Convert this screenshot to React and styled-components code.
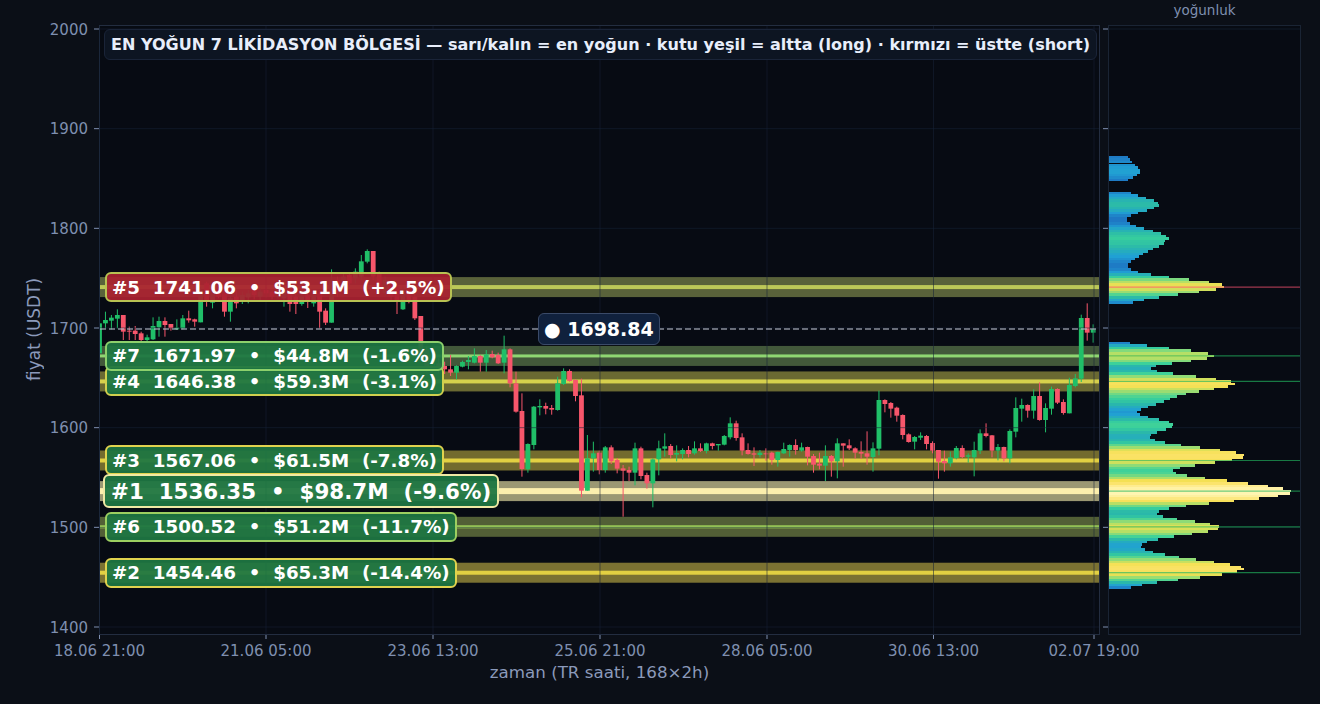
import React from 'react';
import styled, {createGlobalStyle} from 'styled-components';

const priceToY = p => 29 + (2000 - p) * 0.99667;
const candleX = i => 99.5 + 5.95 * i;

const C = {
    page: '#0b0f17',
    plot: '#070b13',
    frame: '#232d40',
    tick: '#7f8fb0',
    up: '#20bf68',
    down: '#f7566b'
};

// type, body top, body bottom, wick top, wick bottom (read off the picture)
const left = [
    ['g', 250, 340, 250, 340], ['g', 240, 250, 215, 265], ['g', 233, 242, 225, 268], ['g', 225, 236, 208, 265],
    ['r', 225, 275, 225, 300], ['r', 272, 275, 260, 300], ['r', 272, 282, 258, 300], ['r', 280, 300, 275, 305],
    ['g', 292, 300, 284, 305], ['g', 258, 298, 232, 300], ['g', 243, 262, 230, 290], ['r', 243, 255, 232, 290],
    ['r', 252, 265, 252, 272], ['g', 263, 268, 238, 270], ['g', 235, 265, 225, 268], ['r', 235, 241, 212, 248],
    ['r', 238, 245, 236, 260], ['g', 150, 247, 140, 247], ['r', 130, 180, 125, 200], ['g', 150, 188, 140, 205],
    ['r', 150, 170, 140, 175], ['r', 160, 215, 150, 230], ['g', 175, 215, 160, 245], ['r', 170, 190, 150, 205],
    ['g', 165, 180, 155, 192], ['g', 160, 172, 150, 190], ['r', 150, 165, 145, 178], ['g', 155, 170, 145, 180],
    ['r', 150, 160, 140, 172], ['r', 155, 170, 148, 178], ['g', 150, 165, 140, 175], ['g', 150, 175, 140, 200],
    ['r', 150, 192, 140, 215], ['r', 170, 192, 150, 222], ['g', 170, 192, 160, 197], ['r', 165, 185, 150, 204],
    ['g', 165, 190, 155, 200], ['r', 160, 215, 150, 265], ['r', 212, 248, 205, 255], ['g', 120, 248, 88, 248],
    ['r', 120, 150, 110, 170], ['g', 110, 140, 100, 150], ['r', 105, 130, 98, 140], ['g', 95, 115, 85, 130],
    ['g', 64, 110, 45, 120], ['g', 33, 65, 28, 70], ['r', 33, 110, 33, 120], ['r', 100, 150, 95, 160],
    ['g', 120, 160, 110, 170], ['r', 130, 170, 120, 180], ['r', 140, 185, 130, 222], ['g', 150, 208, 140, 210],
    ['r', 150, 180, 140, 190], ['r', 170, 235, 160, 240], ['r', 228, 350, 228, 365], ['r', 330, 380, 320, 395],
    ['g', 345, 385, 335, 395], ['r', 370, 385, 355, 400]
];

const right = [
    ['r', 198, 208, 185, 222], ['r', 208, 218, 165, 228], ['g', 198, 218, 196, 238], ['g', 186, 200, 182, 202],
    ['g', 180, 186, 168, 208], ['g', 168, 188, 145, 190], ['r', 168, 188, 165, 215], ['g', 163, 188, 150, 215],
    ['r', 162, 172, 152, 175], ['r', 165, 190, 158, 192], ['g', 148, 188, 107, 220], ['r', 148, 250, 145, 262],
    ['r', 250, 335, 215, 338], ['r', 333, 507, 280, 530], ['g', 432, 508, 430, 518], ['g', 320, 435, 318, 448],
    ['g', 318, 322, 298, 346], ['r', 318, 326, 308, 343], ['r', 324, 329, 315, 344], ['g', 250, 330, 230, 332],
    ['g', 213, 252, 205, 255], ['r', 213, 243, 208, 245], ['r', 240, 288, 238, 304], ['r', 286, 572, 236, 592],
    ['g', 475, 572, 405, 572], ['g', 460, 475, 425, 515], ['r', 458, 510, 452, 523], ['g', 442, 510, 438, 518],
    ['r', 442, 484, 436, 492], ['r', 480, 506, 474, 520], ['r', 505, 512, 495, 650], ['r', 510, 518, 500, 543],
    ['g', 445, 518, 428, 556], ['r', 445, 528, 440, 538], ['r', 525, 550, 518, 566], ['g', 478, 550, 475, 622],
    ['g', 445, 478, 422, 526], ['g', 439, 446, 400, 470], ['r', 438, 465, 432, 476], ['g', 459, 464, 436, 484],
    ['g', 450, 462, 445, 478], ['r', 450, 462, 438, 472], ['g', 445, 460, 424, 464], ['r', 445, 453, 430, 456],
    ['g', 430, 453, 428, 460], ['r', 430, 438, 428, 448], ['g', 432, 436, 432, 452], ['g', 408, 434, 405, 436],
    ['g', 370, 412, 352, 418], ['r', 370, 414, 362, 422], ['r', 412, 452, 400, 466], ['r', 450, 462, 430, 464],
    ['r', 460, 464, 442, 498],
    ['g', 458, 465, 450, 472], ['r', 460, 463, 445, 482], ['r', 458, 480, 455, 494], ['g', 456, 480, 455, 500],
    ['g', 447, 460, 428, 462], ['g', 435, 450, 433, 470], ['r', 435, 450, 418, 464], ['g', 442, 452, 428, 455],
    ['r', 441, 470, 440, 496], ['r', 468, 494, 462, 518], ['r', 491, 497, 458, 508], ['g', 468, 497, 436, 543],
    ['r', 468, 484, 465, 530], ['g', 430, 484, 415, 535], ['r', 430, 437, 430, 500], ['r', 436, 445, 418, 450],
    ['r', 445, 458, 442, 476], ['r', 456, 461, 424, 477], ['r', 460, 470, 394, 494], ['g', 445, 471, 427, 515],
    ['g', 300, 446, 272, 466], ['r', 300, 312, 298, 337], ['r', 309, 326, 306, 353], ['r', 323, 347, 320, 365],
    ['r', 345, 405, 343, 418], ['r', 403, 426, 400, 428], ['g', 411, 425, 408, 448], ['g', 407, 413, 397, 420],
    ['r', 408, 432, 405, 448], ['r', 429, 452, 424, 460], ['r', 450, 485, 450, 536], ['r', 483, 490, 452, 515],
    ['g', 472, 490, 455, 500], ['g', 444, 474, 438, 478], ['r', 444, 471, 436, 475], ['g', 466, 470, 460, 488],
    ['g', 450, 472, 425, 529], ['g', 400, 452, 388, 462], ['r', 400, 408, 370, 412], ['r', 406, 452, 405, 472],
    ['g', 441, 452, 432, 481], ['r', 441, 475, 440, 484], ['g', 393, 475, 388, 490], ['g', 324, 395, 292, 412],
    ['g', 315, 326, 296, 365], ['r', 315, 332, 313, 353], ['g', 288, 332, 268, 356], ['r', 288, 360, 247, 362],
    ['g', 324, 360, 310, 397], ['g', 267, 326, 260, 344], ['r', 267, 308, 265, 312], ['r', 306, 339, 298, 344],
    ['g', 255, 340, 233, 340], ['g', 235, 258, 222, 262], ['g', 54, 236, 44, 246], ['r', 54, 98, 10, 122],
    ['g', 88, 98, 73, 128]
];

const toPx = base => ([type, top, bottom, wickTop, wickBottom]) => ({
    type,
    top: base + top / 3,
    bottom: base + bottom / 3,
    wickTop: base + wickTop / 3,
    wickBottom: base + wickBottom / 3
});

const candles = [...left.map(toPx(240)), ...right.map(toPx(300))];

// order matters: later labels sit on top of earlier ones
const levels = [
    {rank: 2, price: 1454.46, text: '#2  1454.46  •  $65.3M  (-14.4%)', line: '#e2d042', band: '#7b7232', edge: '#e0d34e', side: 'long', thick: 4},
    {rank: 6, price: 1500.52, text: '#6  1500.52  •  $51.2M  (-11.7%)', line: '#a0d25a', band: '#525f36', edge: '#9ccf60', side: 'long', thick: 3},
    {rank: 3, price: 1567.06, text: '#3  1567.06  •  $61.5M  (-7.8%)', line: '#e2d042', band: '#736b2e', edge: '#e0d34e', side: 'long', thick: 4},
    {rank: 1, price: 1536.35, text: '#1  1536.35  •  $98.7M  (-9.6%)', line: '#fcefad', band: '#9b9873', edge: '#efe9a4', side: 'long', thick: 6},
    {rank: 4, price: 1646.38, text: '#4  1646.38  •  $59.3M  (-3.1%)', line: '#d6d04c', band: '#6a6932', edge: '#d0d04e', side: 'long', thick: 4},
    {rank: 7, price: 1671.97, text: '#7  1671.97  •  $44.8M  (-1.6%)', line: '#8fd672', band: '#42583a', edge: '#8cd06c', side: 'long', thick: 3},
    {rank: 5, price: 1741.06, text: '#5  1741.06  •  $53.1M  (+2.5%)', line: '#bcc858', band: '#59623a', edge: '#b8c252', side: 'short', thick: 4}
];

// [start in crop units, width in px]; crops are 3x from the base y
const histTop = [
    [48, 19], [54, 21], [63, 23], [69, 0], [72, 26], [78, 29], [87, 31], [102, 28], [108, 24], [117, 19], [123, 0],
    [156, 22], [162, 29], [171, 37], [177, 45], [186, 49], [192, 50], [201, 45], [207, 38], [216, 29], [222, 22],
    [231, 18], [246, 21], [255, 27], [261, 35], [270, 44], [276, 52], [285, 57], [291, 60], [300, 56], [306, 55],
    [315, 50], [324, 44], [330, 39], [339, 34], [345, 30], [354, 26], [360, 22], [369, 19], [384, 22], [393, 29],
    [399, 42], [408, 60], [414, 80], [423, 100], [429, 113], [438, 115], [444, 107], [453, 90], [459, 69],
    [468, 50], [477, 35], [483, 24], [492, 0]
];
const histMid = [
    [66, 21], [72, 38], [81, 60], [87, 82], [96, 99], [105, 105], [111, 98], [120, 82], [126, 63], [135, 47],
    [141, 42], [150, 48], [156, 64], [165, 87], [174, 107], [180, 122], [189, 126], [195, 119], [204, 105],
    [210, 90], [219, 77], [225, 68], [234, 61], [240, 55], [249, 47], [258, 39], [264, 32], [273, 28], [279, 31],
    [288, 39], [294, 50], [303, 60], [309, 64], [318, 63], [324, 57], [333, 48], [342, 42], [348, 41], [357, 46],
    [363, 56], [372, 72], [378, 91], [387, 111], [393, 127], [402, 135], [408, 134], [417, 123], [423, 0]
];
const histLow = [
    [3, 106], [12, 86], [21, 71], [27, 64], [36, 67], [42, 78], [51, 96], [57, 118], [66, 139], [75, 159], [81, 174],
    [90, 182], [96, 181], [105, 169], [111, 150], [120, 125], [126, 100], [135, 77], [141, 60], [150, 50], [159, 48],
    [165, 54], [174, 68], [180, 86], [189, 101], [195, 110], [204, 109], [210, 99], [219, 83], [225, 65], [234, 49],
    [243, 38], [249, 33], [258, 32], [264, 36], [273, 44], [279, 56], [288, 70], [294, 87], [303, 105], [309, 121],
    [318, 132], [324, 135], [330, 128], [339, 113], [348, 91], [357, 69], [363, 48], [372, 33], [378, 22], [387, 0]
];

const toRows = (base, segs) =>
    segs.slice(0, -1).map(([start, w], i) => ({
        y: base + start / 3,
        h: (segs[i + 1][0] - start) / 3,
        w
    }));

const histRows = [...toRows(140, histTop), ...toRows(320, histMid), ...toRows(460, histLow)].filter(r => r.w > 0);

const stops = [
    [18, [30, 120, 196]], [30, [32, 160, 212]], [48, [42, 184, 170]], [62, [56, 208, 156]], [82, [130, 218, 124]],
    [102, [190, 224, 98]], [116, [243, 224, 82]], [134, [250, 226, 100]], [159, [254, 236, 144]], [182, [255, 245, 178]]
];

const heat = w => {
    const hi = stops.findIndex(s => w <= s[0]);
    if (hi <= 0) return `rgb(${stops[hi < 0 ? stops.length - 1 : 0][1].join(',')})`;
    const [w0, c0] = stops[hi - 1];
    const [w1, c1] = stops[hi];
    const t = (w - w0) / (w1 - w0);
    return `rgb(${c0.map((c, i) => Math.round(c + (c1[i] - c) * t)).join(',')})`;
};

const yTicks = [2000, 1900, 1800, 1700, 1600, 1500, 1400];
const xTicks = [
    {x: 99.5, label: '18.06 21:00'},
    {x: 266, label: '21.06 05:00'},
    {x: 433, label: '23.06 13:00'},
    {x: 600, label: '25.06 21:00'},
    {x: 767, label: '28.06 05:00'},
    {x: 933.5, label: '30.06 13:00'},
    {x: 1094, label: '02.07 19:00'}
];

const GlobalStyle = createGlobalStyle`
    html, body {
        margin: 0;
        background: ${C.page};
        font-family: "DejaVu Sans", "Liberation Sans", sans-serif;
    }
`;

const Page = styled.div`
    display: grid;
    grid-template-columns: 99px 1001px 8px 193px 1fr;
    grid-template-rows: 25px 610px 1fr;
    width: 1320px;
    height: 704px;
    overflow: hidden;
    background: ${C.page};
`;

const HistTitle = styled.div`
    grid-column: 4;
    grid-row: 1;
    color: ${C.tick};
    font-size: 13.5px;
    line-height: 21px;
    text-align: center;
`;

const YAxis = styled.div`
    grid-column: 1;
    grid-row: 2;
    display: grid;
    grid-template-columns: 25px 18px 1fr;
`;

const YTitle = styled.div`
    grid-column: 2;
    writing-mode: vertical-rl;
    transform: rotate(180deg);
    text-align: center;
    line-height: 18px;
    font-size: 17px;
    color: #8b9abb;
    padding-top: 1px;
`;

const AxisSvg = styled.svg`
    display: block;
    width: 100%;
    height: 100%;
    overflow: visible;
`;

const YTickSvg = styled(AxisSvg)`
    grid-column: 3;
`;

const TickText = styled.text`
    fill: ${C.tick};
    font-size: 15px;
    font-family: "DejaVu Sans", sans-serif;
`;

const PlotPanel = styled.div`
    grid-column: 2;
    grid-row: 2;
    position: relative;
    border: 1px solid ${C.frame};
    background: ${C.plot};
`;

const Drawing = styled.svg`
    display: block;
    width: 100%;
    height: 100%;
    overflow: visible;
`;

const TitleBox = styled.div`
    position: absolute;
    top: 3px;
    left: 4px;
    right: 2px;
    height: 31px;
    box-sizing: border-box;
    display: flex;
    align-items: center;
    padding: 0 6px;
    border: 1px solid #1a2438;
    border-radius: 6px;
    background: #0d1522;
    color: #e8eefb;
    font-size: 16.05px;
    font-weight: 700;
    white-space: pre;
`;

const LevelLabel = styled.div`
    position: absolute;
    left: ${p => (p.$major ? 3 : 5)}px;
    top: ${p => p.$top}px;
    transform: translateY(-50%);
    box-sizing: border-box;
    height: ${p => (p.$major ? 34 : 30)}px;
    display: flex;
    align-items: center;
    padding: 0 ${p => (p.$major ? 6 : 5)}px;
    border: 2px solid ${p => p.$edge};
    border-radius: 6px;
    background: ${p => (p.$side === 'short' ? 'rgba(170, 33, 48, 0.93)' : 'rgba(30, 118, 66, 0.94)')};
    color: #fff;
    font-size: ${p => (p.$major ? 21.4 : 18.3)}px;
    font-weight: 700;
    white-space: pre;
`;

const PricePill = styled.div`
    position: absolute;
    left: 438px;
    top: ${p => p.$top}px;
    transform: translateY(-50%);
    box-sizing: border-box;
    height: 32px;
    display: flex;
    align-items: center;
    padding: 0 5px;
    border: 1px solid #3a4a68;
    border-radius: 6px;
    background: #10213d;
    color: #fff;
    font-size: 19px;
    font-weight: 700;
    white-space: pre;
`;

const XAxis = styled.div`
    grid-column: 2;
    grid-row: 3;
    display: grid;
    grid-template-rows: 26px auto;
`;

const XTitle = styled.div`
    text-align: center;
    font-size: 16.7px;
    line-height: 22px;
    color: #8b9abb;
`;

const HistPanel = styled.div`
    grid-column: 4;
    grid-row: 2;
    border: 1px solid #1a2434;
    background: ${C.plot};
`;

const Candle = ({c, i}) => {
    const x = candleX(i);
    const fill = c.type === 'g' ? C.up : C.down;
    return (
        <g fill={fill}>
            <rect x={x - 0.5} y={c.wickTop} width={1} height={c.wickBottom - c.wickTop} />
            <rect x={x - 2.4} y={c.top} width={4.8} height={Math.max(c.bottom - c.top, 1)} />
        </g>
    );
};

const Chart = () => (
    <Drawing viewBox="100 26 999 608" preserveAspectRatio="none">
        {levels.map(l => {
            const y = priceToY(l.price);
            return (
                <g key={l.rank}>
                    <rect x={100} y={y - 10} width={999} height={20} fill={l.band} />
                    <rect x={100} y={y - l.thick / 2} width={999} height={l.thick} fill={l.line} />
                </g>
            );
        })}
        <clipPath id="plot-area">
            <rect x={100} y={26} width={999} height={608} />
        </clipPath>
        <g clipPath="url(#plot-area)">
            {candles.map((c, i) => (
                <Candle key={i} c={c} i={i} />
            ))}
        </g>
        <g stroke="rgba(22, 34, 54, 0.55)" strokeWidth={1}>
            {yTicks.map(p => (
                <line key={p} x1={100} x2={1099} y1={priceToY(p)} y2={priceToY(p)} />
            ))}
            {xTicks.map(t => (
                <line key={t.x} x1={t.x} x2={t.x} y1={26} y2={634} />
            ))}
        </g>
        <line x1={100} x2={1099} y1={329} y2={329} stroke="#b4b8c6" strokeOpacity={0.75} strokeWidth={1.3} strokeDasharray="6 3" />
    </Drawing>
);

const Histogram = () => (
    <Drawing viewBox="1109 26 191 608" preserveAspectRatio="none">
        <g stroke="#101a28" strokeWidth={1}>
            {yTicks.map(p => (
                <line key={p} x1={1109} x2={1300} y1={priceToY(p)} y2={priceToY(p)} />
            ))}
        </g>
        <g shapeRendering="crispEdges">
            {histRows.map((r, i) => (
                <rect key={i} x={1109} y={r.y} width={r.w} height={r.h + 0.2} fill={heat(r.w)} />
            ))}
        </g>
        {levels.map(l => (
            <line
                key={l.rank}
                x1={1109}
                x2={1300}
                y1={priceToY(l.price)}
                y2={priceToY(l.price)}
                stroke={l.side === 'short' ? '#f0506e' : '#22b560'}
                strokeOpacity={0.65}
                strokeWidth={1.2}
            />
        ))}
        <g stroke={C.tick} strokeWidth={1}>
            {yTicks.map(p => (
                <line key={p} x1={1103} x2={1108} y1={priceToY(p)} y2={priceToY(p)} />
            ))}
        </g>
    </Drawing>
);

const App = () => (
    <Page>
        <GlobalStyle />
        <HistTitle>yoğunluk</HistTitle>
        <YAxis>
            <YTitle>fiyat (USDT)</YTitle>
            <YTickSvg viewBox="43 25 56 610" preserveAspectRatio="none">
                {yTicks.map(p => (
                    <g key={p}>
                        <TickText x={88} y={priceToY(p) + 5.5} textAnchor="end">
                            {p}
                        </TickText>
                        <line x1={94} x2={99} y1={priceToY(p)} y2={priceToY(p)} stroke={C.tick} strokeWidth={1} />
                    </g>
                ))}
            </YTickSvg>
        </YAxis>
        <PlotPanel>
            <Chart />
            <TitleBox>EN YOĞUN 7 LİKİDASYON BÖLGESİ — sarı/kalın = en yoğun · kutu yeşil = altta (long) · kırmızı = üstte (short)</TitleBox>
            {levels.map(l => (
                <LevelLabel key={l.rank} $top={priceToY(l.price) - 26} $edge={l.edge} $side={l.side} $major={l.rank === 1}>
                    {l.text}
                </LevelLabel>
            ))}
            <PricePill $top={329 - 26}>● 1698.84</PricePill>
        </PlotPanel>
        <HistPanel>
            <Histogram />
        </HistPanel>
        <XAxis>
            <AxisSvg viewBox="99 635 1001 26" preserveAspectRatio="none">
                {xTicks.map(t => (
                    <g key={t.x}>
                        <line x1={t.x} x2={t.x} y1={634} y2={639} stroke={C.tick} strokeWidth={1} />
                        <TickText x={t.x} y={656} textAnchor="middle">
                            {t.label}
                        </TickText>
                    </g>
                ))}
            </AxisSvg>
            <XTitle>zaman (TR saati, 168×2h)</XTitle>
        </XAxis>
    </Page>
);

export default App;
